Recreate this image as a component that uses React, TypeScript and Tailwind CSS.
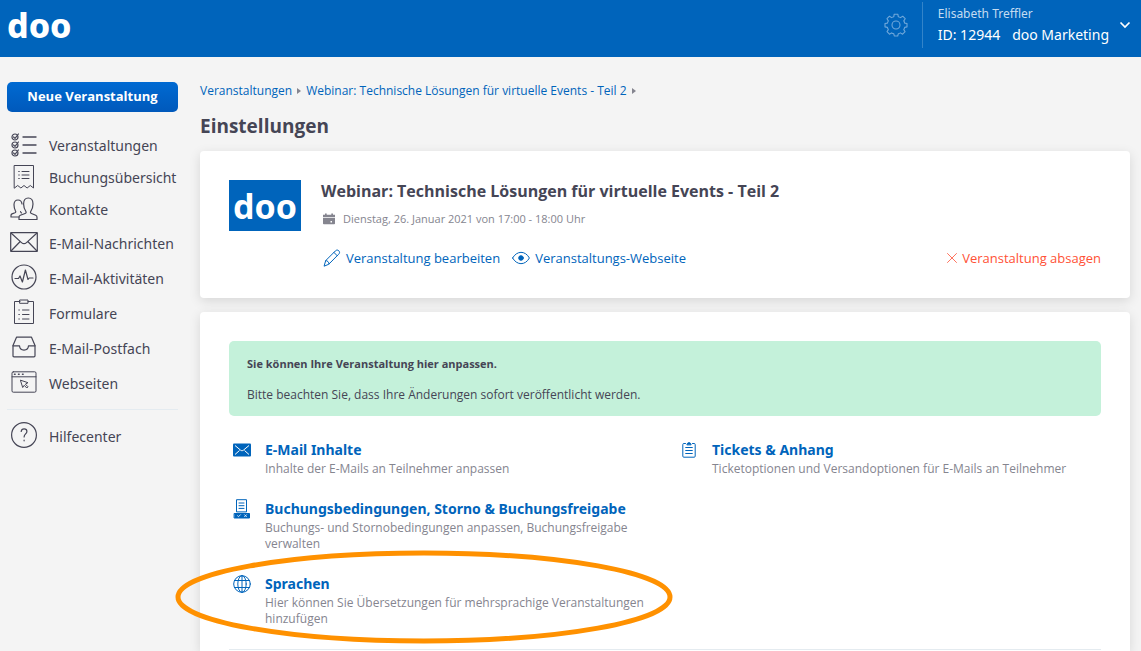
import type { ReactNode, SVGProps } from "react";

type IconProps = SVGProps<SVGSVGElement>;

function LineIcon({ children, ...props }: IconProps) {
  return (
    <svg
      fill="none"
      stroke="currentColor"
      strokeWidth={1.2}
      strokeLinecap="round"
      strokeLinejoin="round"
      aria-hidden="true"
      {...props}
    >
      {children}
    </svg>
  );
}

const ListIcon = () => (
  <LineIcon width={26} height={24} viewBox="0 0 26 24">
    {[4, 12, 20].map((y) => (
      <g key={y}>
        <circle cx="4" cy={y} r="3" />
        <path d={`M2.6 ${y}l1.4 1.4L7.4 ${y - 3}`} />
        <path d={`M12 ${y}H25`} strokeWidth="1.4" />
      </g>
    ))}
  </LineIcon>
);

const ReceiptIcon = () => (
  <LineIcon width={22} height={26} viewBox="0 0 22 26" strokeWidth={1}>
    <path d="M1.500 1.500h19v22.500l-3.200-2.500-3.200 2.500-3.100-2.500-3.100 2.500-3.200-2.500-3.200 2.500z" />
    <path d="M9 7.500h7M9 11h7M9 14.500h7M5.700 7.500h.6M5.700 11h.6M5.700 14.500h.6" />
  </LineIcon>
);

const PeopleIcon = () => (
  <LineIcon width={28} height={24} viewBox="0 0 28 24">
    <path d="M9 22.500h18v-2.200c0-1-.4-1.600-1.300-2l-4.200-1.800c-1-.4-1.300-1-.8-2 1.400-2 2.300-4.300 2.300-7.500 0-3.700-1.700-6-4.700-6s-4.700 2.300-4.700 6c0 3.200.9 5.500 2.300 7.500.5 1 .2 1.600-.8 2l-4.800 1.800c-.9.400-1.300 1-1.300 2z" />
    <path d="M9 20H1v-1.500c0-.8.300-1.300 1-1.600l3-1.200c.9-.4 1-1 .5-1.700-.9-1.700-1.500-3.700-1.500-6.300C4 4.800 5.400 3 8 3c2.400 0 3.700 1.600 4 4M10.500 14.500c.1.600.4 1 1 1.400" />
  </LineIcon>
);

const MailIcon = () => (
  <LineIcon width={28} height={20} viewBox="0 0 28 20">
    <rect x=".7" y=".7" width="26.600" height="18.600" rx=".6" />
    <path d="M1 1l10.500 9.600c1.600 1.400 3.400 1.400 5 0L27 1M1 19l9.200-9.500M27 19l-9.200-9.500" />
  </LineIcon>
);

const PulseIcon = () => (
  <LineIcon width={26} height={26} viewBox="0 0 26 26">
    <circle cx="13" cy="13" r="12" />
    <path d="M4 14.500h3.500L9 12l2.400 6 3-12 2.600 9.500 1.200-1.500H22" />
  </LineIcon>
);

const FormIcon = () => (
  <LineIcon width={22} height={26} viewBox="0 0 22 26" strokeWidth={1}>
    <path d="M7 2.500H1.500v22h19v-22H15" />
    <path d="M7 1h8v3.300H7zM9.500 11H16M9.500 15.500H16M9.500 20H16M5.800 11h.6M5.800 15.500h.6M5.800 20h.6" />
  </LineIcon>
);

const InboxIcon = () => (
  <LineIcon width={24} height={22} viewBox="0 0 24 22">
    <path d="M1 9.500L4.500 1.200h15L23 9.500v10.300c0 .6-.3 1-1 1H2c-.7 0-1-.4-1-1z" />
    <path d="M1 9.800h6.500c.2 2.700 1.900 4.300 4.500 4.300s4.300-1.600 4.500-4.300H23" />
  </LineIcon>
);

const BrowserIcon = () => (
  <LineIcon width={26} height={22} viewBox="0 0 26 22" strokeWidth={1}>
    <rect x="1" y=".8" width="24" height="20.400" rx="1.300" />
    <path d="M1 5.800h24" />
    <path d="M3.500 3.300h.6M7.500 3.300h.6M11.500 3.300h.6" strokeWidth="1.500" />
    <path d="M9.500 9.500l2.200 7 1.500-2.200 2.600 2.700 1.200-1.200-2.600-2.600 2.200-1.300z" />
  </LineIcon>
);

const HelpIcon = () => (
  <LineIcon width={28} height={28} viewBox="0 0 28 28">
    <circle cx="14" cy="14" r="12.400" />
    <path d="M11.200 10.500c.2-1.700 1.300-2.600 2.900-2.600s2.800 1 2.800 2.500c0 2.500-2.800 2.600-2.800 5.600M14.100 19.200v.6" />
  </LineIcon>
);

const GearIcon = () => (
  <LineIcon width={24} height={24} viewBox="0 0 24 24" strokeWidth={1.1}>
    <circle cx="12" cy="12" r="4" />
    <path d="M10.200 1.200h3.600l.5 2.500c.8.200 1.500.5 2.200.9l2.200-1.400 2.500 2.500-1.400 2.200c.4.600.7 1.400.9 2.200l2.300.4v3.400l-2.300.5c-.2.800-.5 1.500-.9 2.200l1.300 2.100-2.500 2.500-2.200-1.300c-.6.400-1.400.7-2.100.9l-.6 2.200h-3.400l-.5-2.200c-.8-.2-1.500-.5-2.200-.9l-2.100 1.300L3 18.700l1.300-2.100c-.4-.7-.7-1.400-.9-2.200L1 13.900v-3.400l2.400-.4c.2-.8.500-1.500.9-2.200L3 5.700l2.500-2.500 2.100 1.400c.7-.4 1.400-.7 2.200-.9z" />
  </LineIcon>
);

const PencilIcon = () => (
  <LineIcon width={18} height={18} viewBox="0 0 18 18" strokeWidth={1}>
    <path d="M1.200 16.800l1.500-5.200L12.300 2c1.300-1.300 2.500-1.200 3.500-.2s1.100 2.200-.2 3.500L6 15z" />
    <path d="M2.700 11.600c1.600-.3 3.500 1.600 3.300 3.400M10.900 3.400l3.400 3.400" />
  </LineIcon>
);

const EyeIcon = () => (
  <LineIcon width={18} height={14} viewBox="0 0 18 14" strokeWidth={1}>
    <path d="M.6 7c4.200-7.600 12.600-7.600 16.800 0-4.200 7.600-12.600 7.600-16.800 0z" />
    <circle cx="9" cy="7" r="2.300" fill="currentColor" />
  </LineIcon>
);

const CalendarIcon = () => (
  <svg width="12" height="12" viewBox="0 0 12 12" fill="currentColor" aria-hidden="true">
    <path d="M0 1.800h2V.4h1.700v1.400h4.600V.4H10v1.400h2v2.400H0zM0 5h12v5.500c0 .5-.3.800-.8.800H.8c-.5 0-.8-.3-.8-.8zm7.500 3v1.500H9V8z" />
  </svg>
);

const CrossIcon = () => (
  <LineIcon width={10} height={10} viewBox="0 0 10 10" strokeWidth={0.8}>
    <path d="M.5.5l9 9M9.500.5l-9 9" />
  </LineIcon>
);

const SolidMailIcon = () => (
  <svg width="18" height="14" viewBox="0 0 18 14" aria-hidden="true">
    <rect y=".5" width="18" height="13" rx="1" fill="#0064bb" />
    <path
      d="M2 2.500l5.500 4.600c1 .8 2 .8 3 0L16 2.500M2 11.500l4.500-4M16 11.500l-4.500-4"
      fill="none"
      stroke="#fff"
      strokeWidth="1"
    />
  </svg>
);

const TermsIcon = () => (
  <LineIcon width={18} height={20} viewBox="0 0 18 20" strokeWidth={1}>
    <path d="M3.500 12.500V.7h10v11.800zM6 4h5M6 6.700h5M6 9.400h5" />
    <path d="M1.500 14.500h15v4.500h-15z" fill="currentColor" />
    <path d="M4.500 16.700l1 1 2-2M11.500 15.700l2 2M13.500 15.700l-2 2" stroke="#fff" strokeWidth=".8" />
  </LineIcon>
);

const GlobeIcon = () => (
  <LineIcon width={18} height={18} viewBox="0 0 18 18" strokeWidth={1}>
    <circle cx="9" cy="9" r="8.300" />
    <ellipse cx="9" cy="9" rx="4.200" ry="8.300" />
    <path d="M9 .7v16.600M1.500 5.500h15M1.500 12.500h15" />
  </LineIcon>
);

const ClipboardIcon = () => (
  <LineIcon width={14} height={16} viewBox="0 0 14 16" strokeWidth={1}>
    <path d="M3.500 1.500H1.800c-.7 0-1 .4-1 1v11.700c0 .6.300 1 1 1h10.400c.7 0 1-.4 1-1V2.500c0-.6-.3-1-1-1h-1.700" />
    <path d="M5 2.500l.5-1.200L7 .6l1.500.7L9 2.500z" fill="currentColor" />
    <path d="M3.700 5.500h6.600M3.700 8.500h6.600M3.700 11.500h6.600" />
  </LineIcon>
);

function NavItem({ icon, label, tall }: { icon: ReactNode; label: string; tall?: boolean }) {
  return (
    <li>
      <a href="#" className={`flex items-center ${tall ? "h-[35px]" : "h-8"}`}>
        <span className={`flex w-[34px] shrink-0 justify-center ${tall ? "pb-1" : "pb-0.5"}`}>{icon}</span>
        <span className="ml-2 whitespace-nowrap">{label}</span>
      </a>
    </li>
  );
}

function Setting({
  icon,
  title,
  text,
  children,
}: {
  icon: ReactNode;
  title: string;
  text: string;
  children?: ReactNode;
}) {
  return (
    <div className="relative flex gap-2.5">
      <span className="flex h-5 w-[26px] shrink-0 items-center justify-center text-[#0064bb]">{icon}</span>
      <div>
        <h3 className="font-['Noto_Sans','Open_Sans',sans-serif] text-sm leading-5 font-bold">
          <a href="#" className="text-[#0064bb]">{title}</a>
        </h3>
        <p className="mt-px text-xs leading-4 text-[#85858f]">{text}</p>
      </div>
      {children}
    </div>
  );
}

const Triangle = () => (
  <svg width="4" height="6" viewBox="0 0 4 6" fill="#85858f" aria-hidden="true">
    <path d="M0 0l4 3-4 3z" />
  </svg>
);

export default function App() {
  return (
    <div className="flex min-h-screen flex-col overflow-x-hidden bg-[#f4f4f4] font-['Open_Sans',sans-serif] text-[#454555]">
      <header className="flex h-[57px] items-center justify-between bg-[#0064bb] pr-2.5 pl-[7px] text-white">
        <a href="#" className="pb-2 font-['Noto_Sans','Open_Sans',sans-serif] text-[34px] leading-none font-extrabold">
          doo
        </a>
        <div className="flex items-center pb-2">
          <button type="button" aria-label="Einstellungen" className="mr-3.5 text-[#70a8da]">
            <GearIcon />
          </button>
          <button type="button" className="flex items-center border-l border-[#3384c9] pl-[15px] text-left">
            <span className="flex flex-col pt-1 font-['Noto_Sans','Open_Sans',sans-serif]">
              <span className="text-xs leading-4 text-[#c4dcf1]">Elisabeth Treffler</span>
              <span className="flex gap-3 text-sm leading-[26px]">
                <span>ID: 12944</span>
                <span>doo Marketing</span>
              </span>
            </span>
            <svg className="ml-2.5" width="12" height="8" viewBox="0 0 12 8" fill="none" stroke="white" strokeWidth="1.700" aria-hidden="true">
              <path d="M1.500 1.500L6 6l4.500-4.500" />
            </svg>
          </button>
        </div>
      </header>

      <div className="flex flex-1">
        <aside className="w-[200px] shrink-0 pt-[25px] pl-[7px]">
          <button
            type="button"
            className="h-[30px] w-[171px] rounded-[5px] bg-linear-to-b from-[#006ad2] to-[#0059bb] text-[13px] font-bold text-white"
          >
            Neue Veranstaltung
          </button>
          <nav aria-label="Hauptnavigation" className="w-[171px] pt-[18px] font-['Noto_Sans','Open_Sans',sans-serif] text-sm">
            <ul>
              <NavItem icon={<ListIcon />} label="Veranstaltungen" />
              <NavItem icon={<ReceiptIcon />} label="Buchungsübersicht" />
              <NavItem icon={<PeopleIcon />} label="Kontakte" />
              <NavItem tall icon={<MailIcon />} label="E-Mail-Nachrichten" />
              <NavItem tall icon={<PulseIcon />} label="E-Mail-Aktivitäten" />
              <NavItem tall icon={<FormIcon />} label="Formulare" />
              <NavItem tall icon={<InboxIcon />} label="E-Mail-Postfach" />
              <NavItem tall icon={<BrowserIcon />} label="Webseiten" />
            </ul>
            <ul className="mt-2 border-t border-[#e4ebf0] pt-[9px]">
              <NavItem tall icon={<HelpIcon />} label="Hilfecenter" />
            </ul>
          </nav>
        </aside>

        <main className="flex min-w-0 flex-1 flex-col pt-[25px] pr-[11px]">
          <nav aria-label="Brotkrumen" className="flex items-center gap-[5px] text-xs leading-[18px] text-[#0064bb]">
            <a href="#">Veranstaltungen</a>
            <Triangle />
            <a href="#">Webinar: Technische Lösungen für virtuelle Events - Teil 2</a>
            <Triangle />
          </nav>
          <h1 className="mt-3 text-[19px] leading-7 font-bold">Einstellungen</h1>

          <section className="mt-[11px] flex gap-5 rounded bg-white p-[29px] shadow-[0_3px_12px_rgba(0,0,0,0.12)]">
            <div className="flex h-[51px] w-[72px] shrink-0 items-center justify-center bg-[#0064bb] font-['Noto_Sans','Open_Sans',sans-serif] text-[34px] leading-none font-bold text-white">
              doo
            </div>
            <div className="min-w-0 flex-1">
              <h2 className="text-base leading-[22px] font-bold">
                Webinar: Technische Lösungen für virtuelle Events - Teil 2
              </h2>
              <p className="mt-2 flex items-center gap-2 pl-0.5 text-[11px] leading-[18px] text-[#85858f]">
                <CalendarIcon />
                Dienstag, 26. Januar 2021 von 17:00 - 18:00 Uhr
              </p>
              <div className="mt-5 mb-px flex items-center gap-3 pl-0.5 text-[13px] leading-5 text-[#0064bb]">
                <a href="#" className="flex items-center gap-[5px]">
                  <PencilIcon />
                  Veranstaltung bearbeiten
                </a>
                <a href="#" className="flex items-center gap-[5px]">
                  <EyeIcon />
                  Veranstaltungs-Webseite
                </a>
                <a href="#" className="ml-auto flex items-center gap-[5px] text-[#ff5136]">
                  <CrossIcon />
                  Veranstaltung absagen
                </a>
              </div>
            </div>
          </section>

          <section className="mt-3.5 flex-1 rounded-t bg-white px-[29px] pt-[29px] shadow-[0_3px_12px_rgba(0,0,0,0.12)]">
            <div className="rounded-[5px] bg-[#c4f1da] px-[18px] pt-3.5 pb-3 text-xs leading-[18px]">
              <p className="text-[11px] font-bold">Sie können Ihre Veranstaltung hier anpassen.</p>
              <p className="mt-[13px]">Bitte beachten Sie, dass Ihre Änderungen sofort veröffentlicht werden.</p>
            </div>
            <div className="mt-6 grid grid-cols-2 gap-x-[22px] border-b border-[#e4ebf0] pb-[22px]">
              <div className="flex flex-col gap-[22px]">
                <Setting
                  icon={<SolidMailIcon />}
                  title="E-Mail Inhalte"
                  text="Inhalte der E-Mails an Teilnehmer anpassen"
                />
                <Setting
                  icon={<TermsIcon />}
                  title="Buchungsbedingungen, Storno & Buchungsfreigabe"
                  text="Buchungs- und Stornobedingungen anpassen, Buchungsfreigabe verwalten"
                />
                <Setting
                  icon={<GlobeIcon />}
                  title="Sprachen"
                  text="Hier können Sie Übersetzungen für mehrsprachige Veranstaltungen hinzufügen"
                >
                  <svg
                    className="pointer-events-none absolute -top-6 -left-[54px]"
                    width="498"
                    height="94"
                    viewBox="0 0 498 94"
                    fill="none"
                    stroke="#ff9100"
                    strokeWidth="5"
                    aria-hidden="true"
                  >
                    <ellipse cx="249" cy="47" rx="246" ry="44" />
                  </svg>
                </Setting>
              </div>
              <div>
                <Setting
                  icon={<ClipboardIcon />}
                  title="Tickets & Anhang"
                  text="Ticketoptionen und Versandoptionen für E-Mails an Teilnehmer"
                />
              </div>
            </div>
          </section>
        </main>
      </div>
    </div>
  );
}
